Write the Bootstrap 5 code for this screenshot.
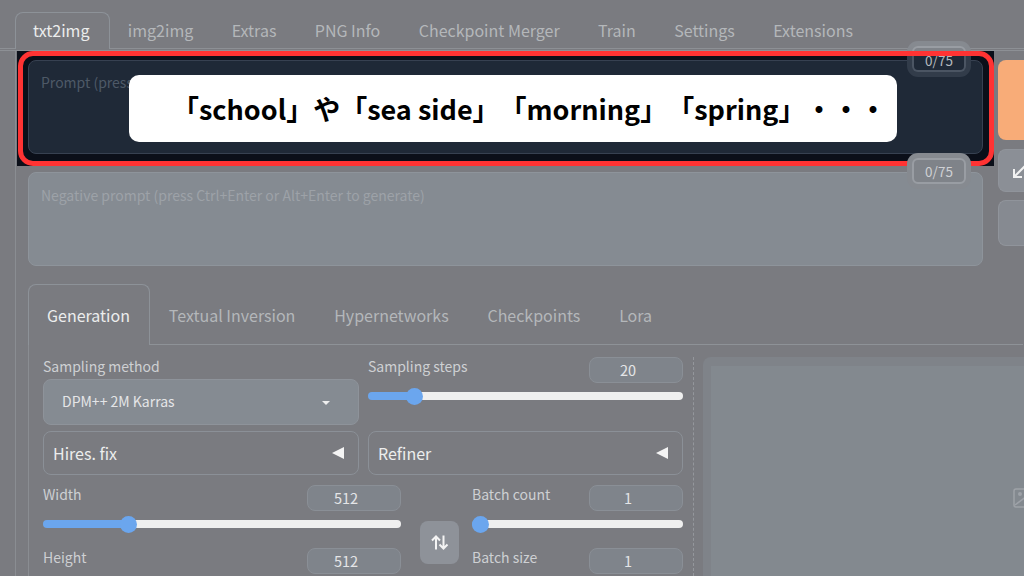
<!DOCTYPE html>
<html lang="ja">
<head>
<meta charset="utf-8">
<title>txt2img</title>
<link href="https://cdn.jsdelivr.net/npm/bootstrap@5.3.0/dist/css/bootstrap.min.css" rel="stylesheet">
<style>
html,body{height:576px;overflow:hidden}
body{background:#7a7b80;font-family:"Noto Sans CJK JP","Noto Sans",sans-serif;color:#d6d8da;position:relative}
.top-tabs{height:49px;padding-left:15px;padding-top:12px;border-bottom:1px solid #8d9095;--bs-nav-tabs-border-width:0;flex-wrap:nowrap}
.top-tabs .nav-link,.sub-tabs .nav-link{color:#b4b7ba;font-size:16px;line-height:24px;background:transparent;border:1px solid transparent;border-bottom:0;margin:0;white-space:nowrap}
.top-tabs .nav-link.active,.sub-tabs .nav-link.active{color:#eceded;background:#7a7b80;border-color:#8d9298;border-radius:8px 8px 0 0;position:relative}
.top-tabs .nav-link{padding:5px 19.430px 0 17px;height:37px}
.top-rule{height:2px;border-bottom:1px solid #8d9095}
.tab-pane-main{margin-left:15px;border-left:1px solid #8a8d92;padding-left:12px;height:525px}
.prompts{width:955px;flex:none;position:relative}
.lit{background:#0b0f19;margin:0 -11px 0 -11px;padding:9px 11px 12px;height:115px;position:relative;overflow:hidden}
.lit::after{content:"";position:absolute;inset:0 0 0 1px;border:5px solid #ff3333;border-radius:15px;pointer-events:none}
.lit .form-control{height:94px;background:#1f2937;border:1px solid #374151;border-radius:8px;resize:none;font-size:14px;line-height:20px;padding:11px 12px}
.lit .form-control::placeholder{color:#4e5967;opacity:1}
.neg-wrap{margin-top:6px;position:relative}
.neg-wrap .form-control{height:94px;background:#858b92;border:1px solid #8e949b;border-radius:8px;resize:none;font-size:14px;line-height:20px;padding:12px}
.neg-wrap .form-control::placeholder{color:#9da2a8;opacity:1}
.counter{position:absolute;width:54px;height:26px;border-radius:6px;font-size:13.5px;line-height:23px;text-align:center;border:2px solid}
.counter-lit{left:895px;background:#1f2937;border-color:#4b5563;box-shadow:0 0 0 5px #323c4a;color:#b5b9be}
.counter-dim{left:884px;background:#7f8389;border-color:#999da3;box-shadow:0 0 0 5px #868a90;color:#cfd1d4}
.counter-a{top:-5px}
.counter-top{top:0;height:21px;border-top:0;border-radius:0 0 6px 6px;line-height:18px}
.counter-c{top:107px}
.counter-b{top:-14px}
.side-btns{padding-top:9px;margin-left:15px;width:26px;flex:none}
.go-btn{height:80px;background:#f8ac78;border-radius:8px 0 0 8px;border:0;width:100%;display:block;padding:0}
.tool-btn{height:43px;background:#8b8f96;border:1px solid #90949b;border-right:0;border-radius:8px 0 0 8px;margin-top:9px;padding:0 0 0 13px;width:100%;display:block;text-align:left;line-height:1}
.tool-btn.blank{height:46px;margin-top:8px;background:#868a91}
.banner{position:absolute;left:129px;top:75px;width:768px;height:67px;background:#fff;border-radius:10px;color:#000;font-size:27px;font-weight:700;line-height:67px;padding-left:43px;white-space:nowrap;z-index:5;text-spacing-trim:space-all;font-feature-settings:"palt" 0,"chws" 0,"halt" 0}
.sub-tabs{margin-top:18px;height:61px;border-bottom:1px solid #8e9297;--bs-nav-tabs-border-width:0;flex-wrap:nowrap;width:995px}
.sub-tabs .nav-link{padding:18px 18.800px 0 18px}
.sub-tabs .nav-link.active{height:61px;margin-bottom:-1px}
.sub-body{border-left:1px solid #8a8d92;padding:12px 0 0 14px;margin-top:0}
.form-col{width:640px;flex:none}
.two-col{display:grid;grid-template-columns:316px 315px;column-gap:9px}
.fld-label{font-size:14px;line-height:18px;height:22px;color:#ced0d3;margin:0}
.top-row{height:26px;display:flex;justify-content:space-between}
.num{width:94px;height:26px;background:#7f848b;border:1px solid #8a8f96;border-radius:8px;color:#e4e5e7;font-size:14.5px;line-height:24px;text-align:center;padding-right:16px}
.pick{height:46px;background:#858b92;border:1px solid #8e939a;border-radius:8px;padding:0 18px 1px;font-size:14px;color:#e4e5e7;display:flex;align-items:center;justify-content:space-between}
.caret-down{width:0;height:0;border-left:4px solid transparent;border-right:4px solid transparent;border-top:4px solid #eee;margin-right:10px;margin-top:3px}
.fold{height:44px;border:1px solid #8b9097;border-radius:8px;font-size:16px;color:#eceded;padding:0 14px 0 9px;display:flex;align-items:center;justify-content:space-between}
.fold-row{margin-top:6px}
.tri{width:0;height:0;border-top:6px solid transparent;border-bottom:6px solid transparent;border-right:12px solid #f4f4f4}
.slide{-webkit-appearance:none;appearance:none;display:block;width:100%;height:26px;background:transparent;margin:0 0 11px;padding:0}
.slide::-webkit-slider-runnable-track{height:8px;border-radius:4px;background:linear-gradient(to right,#6ba6ee var(--fill),#efefef var(--fill))}
.slide::-webkit-slider-thumb{-webkit-appearance:none;width:17px;height:17px;border-radius:50%;background:#6ba6ee;margin-top:-4.5px;border:0}
.size-grid{display:grid;grid-template-columns:358px 71px 211px;margin-top:10px}
.swap{width:39px;height:43px;background:#8e9299;border:0;border-radius:8px;margin:36px 0 0 19px;padding:0;display:flex;align-items:center;justify-content:center}
.split{width:0;border-left:1px dashed #94979c;margin-left:10px;height:219px}
.gallery{margin-left:9px;background:#7f8389;border-radius:8px 0 0 0;padding:9px 0 0 8px;flex:1;height:219px}
.gallery-in{background:#83898f;height:100%;display:flex;align-items:center;justify-content:flex-end;overflow:hidden}
.gallery-in svg{margin-top:54px}
</style>
</head>
<body>
<ul class="nav nav-tabs top-tabs">
  <li class="nav-item"><a class="nav-link active" href="#">txt2img</a></li>
  <li class="nav-item"><a class="nav-link" href="#">img2img</a></li>
  <li class="nav-item"><a class="nav-link" href="#">Extras</a></li>
  <li class="nav-item"><a class="nav-link" href="#">PNG Info</a></li>
  <li class="nav-item"><a class="nav-link" href="#">Checkpoint Merger</a></li>
  <li class="nav-item"><a class="nav-link" href="#">Train</a></li>
  <li class="nav-item"><a class="nav-link" href="#">Settings</a></li>
  <li class="nav-item"><a class="nav-link" href="#">Extensions</a></li>
</ul>
<div class="top-rule"></div>
<div class="tab-pane-main">
  <div class="d-flex">
    <div class="prompts">
      <span class="counter counter-dim counter-a"></span>
      <div class="lit">
        <textarea class="form-control" placeholder="Prompt (press Ctrl+Enter or Alt+Enter to generate)"></textarea>
        <span class="counter counter-lit counter-top">0/75</span>
        <span class="counter counter-lit counter-c"></span>
      </div>
      <div class="neg-wrap">
        <textarea class="form-control" placeholder="Negative prompt (press Ctrl+Enter or Alt+Enter to generate)"></textarea>
        <span class="counter counter-dim counter-b">0/75</span>
      </div>
    </div>
    <div class="side-btns">
      <button class="go-btn" type="button" aria-label="Generate"></button>
      <button class="tool-btn" type="button" aria-label="Read"><svg width="12" height="14" viewBox="0 0 12 14"><path d="M13 1 2 12M2 4v8h8" fill="none" stroke="#f2f2f2" stroke-width="2"/></svg></button>
      <button class="tool-btn blank" type="button" aria-label="Clear"></button>
    </div>
  </div>
  <ul class="nav nav-tabs sub-tabs">
    <li class="nav-item"><a class="nav-link active" href="#">Generation</a></li>
    <li class="nav-item"><a class="nav-link" href="#">Textual Inversion</a></li>
    <li class="nav-item"><a class="nav-link" href="#">Hypernetworks</a></li>
    <li class="nav-item"><a class="nav-link" href="#">Checkpoints</a></li>
    <li class="nav-item"><a class="nav-link" href="#">Lora</a></li>
  </ul>
  <div class="sub-body d-flex">
    <div class="form-col">
      <div class="two-col">
        <div>
          <p class="fld-label">Sampling method</p>
          <div class="pick"><span>DPM++ 2M Karras</span><span class="caret-down"></span></div>
        </div>
        <div>
          <div class="top-row"><p class="fld-label">Sampling steps</p><div class="num">20</div></div>
          <input class="slide" type="range" min="1" max="150" value="20" style="--fill:15%" aria-label="Sampling steps">
        </div>
      </div>
      <div class="two-col fold-row">
        <div class="fold"><span>Hires. fix</span><span class="tri"></span></div>
        <div class="fold"><span>Refiner</span><span class="tri"></span></div>
      </div>
      <div class="size-grid">
        <div>
          <div class="top-row"><p class="fld-label">Width</p><div class="num">512</div></div>
          <input class="slide" type="range" min="64" max="2048" value="512" style="--fill:24%" aria-label="Width">
          <div class="top-row"><p class="fld-label">Height</p><div class="num">512</div></div>
        </div>
        <div>
          <button class="swap" type="button" aria-label="Swap"><svg width="18" height="15" viewBox="0 0 18 15"><path d="M5 14.500V1.500M1 5.500 5 1.500l4 4M12.500 0.500v13M8.500 9.500l4 4 4-4" fill="none" stroke="#f4f4f4" stroke-width="2"/></svg></button>
        </div>
        <div>
          <div class="top-row"><p class="fld-label">Batch count</p><div class="num">1</div></div>
          <input class="slide" type="range" min="1" max="100" value="1" style="--fill:4%" aria-label="Batch count">
          <div class="top-row"><p class="fld-label">Batch size</p><div class="num">1</div></div>
        </div>
      </div>
    </div>
    <div class="split"></div>
    <div class="gallery">
      <div class="gallery-in"><svg width="11" height="20" viewBox="0 0 11 20"><rect x="1" y="1" width="20" height="18" rx="2" fill="none" stroke="#9ea2a8" stroke-width="1.500"/><circle cx="7" cy="6" r="2" fill="#9ea2a8"/><path d="M2 17 14 8l7 6" fill="none" stroke="#9ea2a8" stroke-width="1.500"/></svg></div>
    </div>
  </div>
</div>
<div class="banner">「school」や「sea side」「morning」「spring」・・・</div>
</body>
</html>
